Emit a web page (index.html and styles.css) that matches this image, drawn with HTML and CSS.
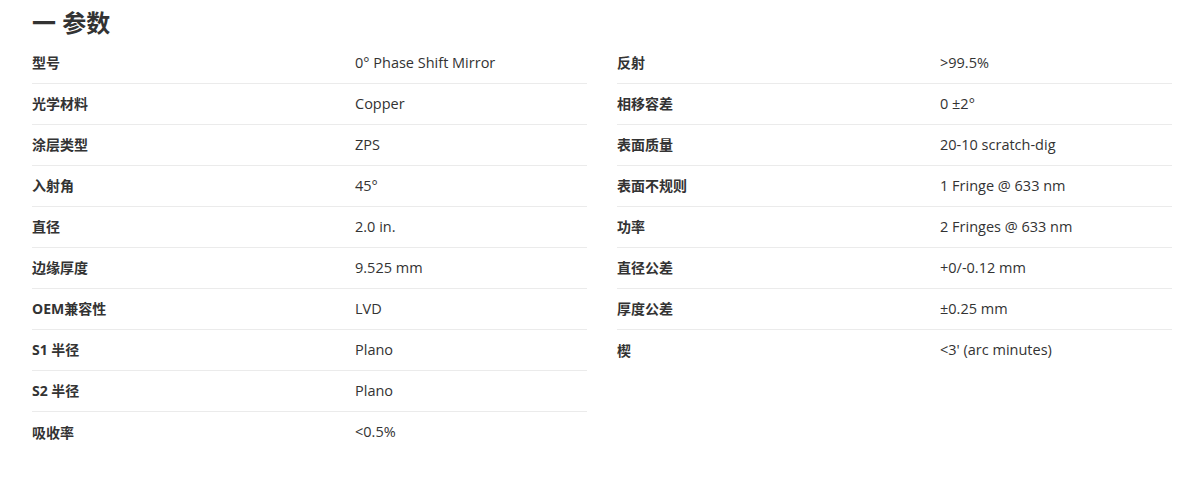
FILE: index.html
```html
<!DOCTYPE html>
<html lang="zh-CN">
<head>
<meta charset="utf-8">
<title>参数</title>
<link rel="stylesheet" href="styles.css">
</head>
<body>
<section class="specs">
  <h2 class="specs-title">一 参数</h2>
  <div class="specs-grid">
    <div class="spec-table">
      <div class="spec-row"><span class="spec-label">型号</span><span class="spec-value">0° Phase Shift Mirror</span></div>
      <div class="spec-row"><span class="spec-label">光学材料</span><span class="spec-value">Copper</span></div>
      <div class="spec-row"><span class="spec-label">涂层类型</span><span class="spec-value">ZPS</span></div>
      <div class="spec-row"><span class="spec-label">入射角</span><span class="spec-value">45°</span></div>
      <div class="spec-row"><span class="spec-label">直径</span><span class="spec-value">2.0 in.</span></div>
      <div class="spec-row"><span class="spec-label">边缘厚度</span><span class="spec-value">9.525 mm</span></div>
      <div class="spec-row"><span class="spec-label">OEM兼容性</span><span class="spec-value">LVD</span></div>
      <div class="spec-row"><span class="spec-label">S1 半径</span><span class="spec-value">Plano</span></div>
      <div class="spec-row"><span class="spec-label">S2 半径</span><span class="spec-value">Plano</span></div>
      <div class="spec-row"><span class="spec-label">吸收率</span><span class="spec-value">&lt;0.5%</span></div>
    </div>
    <div class="spec-table">
      <div class="spec-row"><span class="spec-label">反射</span><span class="spec-value">&gt;99.5%</span></div>
      <div class="spec-row"><span class="spec-label">相移容差</span><span class="spec-value">0 ±2°</span></div>
      <div class="spec-row"><span class="spec-label">表面质量</span><span class="spec-value">20-10 scratch-dig</span></div>
      <div class="spec-row"><span class="spec-label">表面不规则</span><span class="spec-value">1 Fringe @ 633 nm</span></div>
      <div class="spec-row"><span class="spec-label">功率</span><span class="spec-value">2 Fringes @ 633 nm</span></div>
      <div class="spec-row"><span class="spec-label">直径公差</span><span class="spec-value">+0/-0.12 mm</span></div>
      <div class="spec-row"><span class="spec-label">厚度公差</span><span class="spec-value">±0.25 mm</span></div>
      <div class="spec-row"><span class="spec-label">楔</span><span class="spec-value">&lt;3' (arc minutes)</span></div>
    </div>
  </div>
</section>
</body>
</html>
```
FILE: styles.css
```css
html, body {
  margin: 0;
  padding: 0;
  background: #ffffff;
}
body {
  font-family: "Open Sans", "Noto Sans CJK SC", sans-serif;
  font-size: 14px;
  color: #333333;
}
.specs {
  padding: 0 20px 0 32px;
}
.specs-title {
  margin: 0;
  height: 43px;
  box-sizing: border-box;
  padding-top: 8px;
  font-size: 24px;
  line-height: 30px;
  font-weight: 700;
  color: #333333;
}
.specs-grid {
  display: grid;
  grid-template-columns: 555px 555px;
  column-gap: 30px;
  align-items: start;
}
.spec-row {
  display: grid;
  grid-template-columns: 323px 1fr;
  align-items: center;
  height: 41px;
  padding-bottom: 2px;
  box-sizing: border-box;
  border-bottom: 1px solid #ebebeb;
}
.spec-row:last-child {
  border-bottom: none;
}
.spec-label {
  font-weight: 700;
}
.spec-value {
  font-weight: 400;
  font-size: 14.5px;
}
```
